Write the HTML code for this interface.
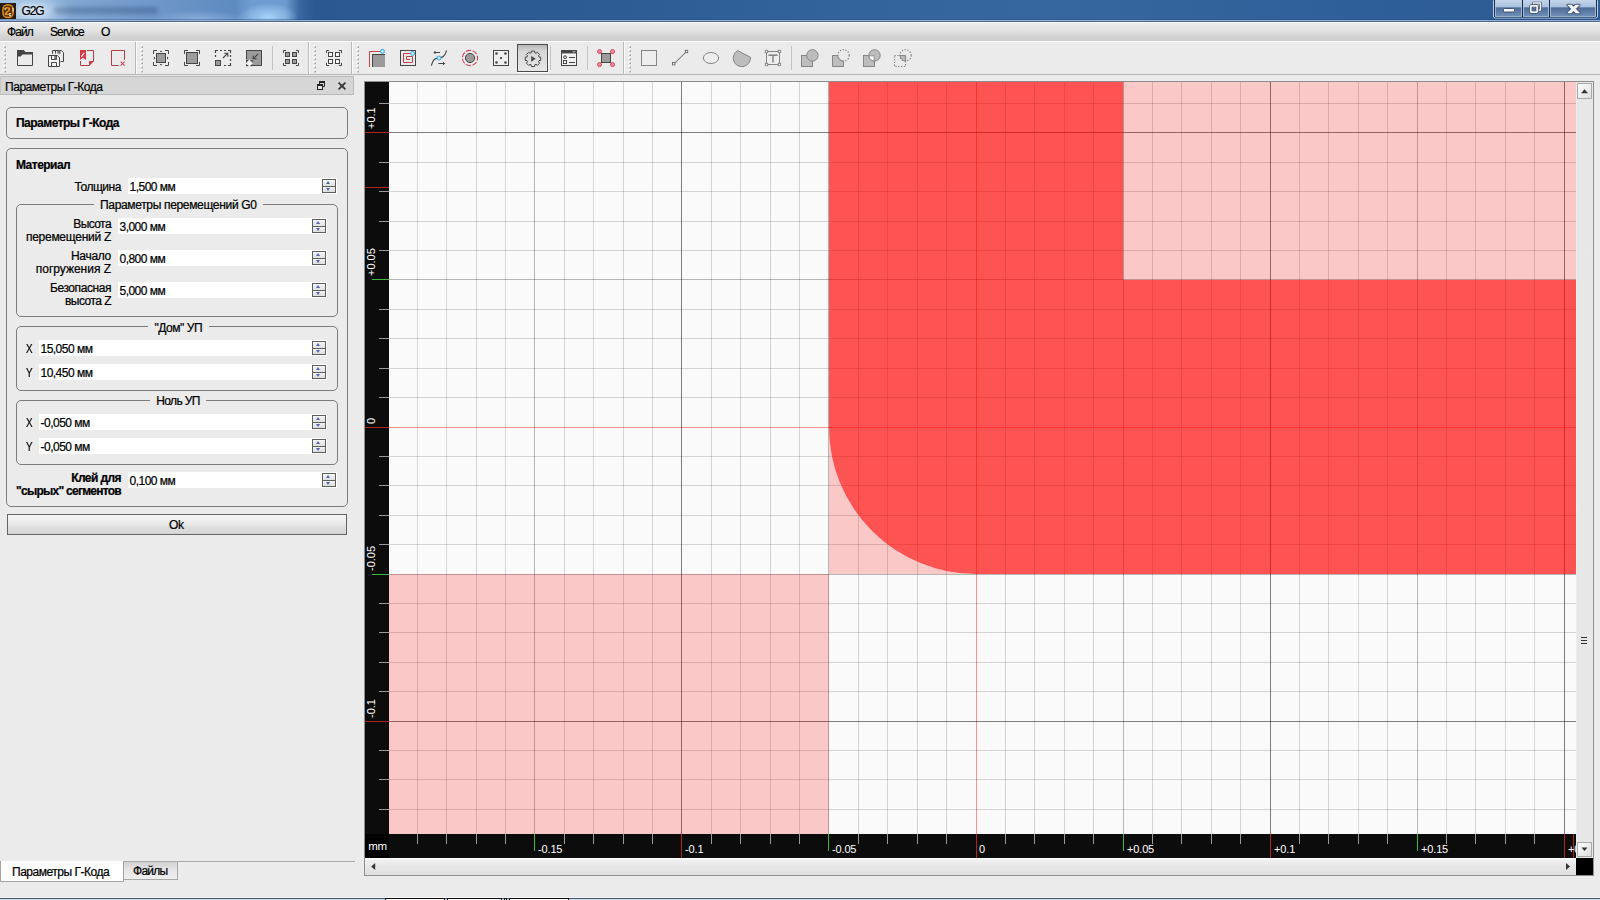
<!DOCTYPE html>
<html lang="ru">
<head>
<meta charset="utf-8">
<title>G2G</title>
<style>
*{box-sizing:border-box;margin:0;padding:0}
html,body{width:1600px;height:900px;overflow:hidden}
body{position:relative;background:#ebebeb;-webkit-text-stroke:.22px #000;font-family:"Liberation Sans","DejaVu Sans",sans-serif;font-size:12px;color:#000;line-height:14px}
.abs{position:absolute}
#title{position:absolute;left:0;top:0;width:1600px;height:22px;
 background:linear-gradient(90deg,#9fbfe1 0px,#98badf 45px,#82a8d3 70px,#7098c9 150px,#5d8ac0 235px,#6f9cd0 250px,#6f9cd0 285px,#3a669f 300px,#2b5891 315px,#2d5b94 600px,#33649b 850px,#36689f 1050px,#2f5f98 1350px,#2d5b94 1600px);}
#title .glow{position:absolute;left:0;top:0;width:700px;height:22px;background:radial-gradient(ellipse 30px 14px at 268px 17px,rgba(175,220,255,.85),rgba(175,220,255,0) 100%),radial-gradient(ellipse 50px 10px at 200px 20px,rgba(175,205,240,.5),rgba(175,205,240,0) 100%),radial-gradient(ellipse 40px 14px at 34px 11px,rgba(225,238,252,.6),rgba(215,232,250,0) 100%)}
#title .ghost{position:absolute;left:54px;top:7px;width:104px;height:7px;background:rgba(30,55,100,.30);filter:blur(2.2px);border-radius:4px}
#title .l1{position:absolute;left:0;top:19px;width:1600px;height:2px;background:linear-gradient(180deg,rgba(40,70,120,.35) 0,rgba(40,70,120,.35) 50%,#8fafd6 50%,#8fafd6 100%)}
#title .shade{display:none}
#title .line{position:absolute;left:0;top:21px;width:1600px;height:1px;background:#566a85}
#title .t{position:absolute;left:21.5px;top:3.5px;font-size:12px;line-height:14px;color:#000;letter-spacing:-1.1px;text-shadow:0 0 5px rgba(255,255,255,.9),0 0 8px rgba(255,255,255,.7)}
#menu{position:absolute;left:0;top:22px;width:1600px;height:19px;background:linear-gradient(180deg,#f5f8fd 0,#f5f8fd 1px,#ececec 1px,#e1e1e1 45%,#d2d2d2 80%,#cdcdcd 100%)}
#menu>span{position:absolute;top:3px;line-height:14px}
#tb{position:absolute;left:0;top:41px;width:1600px;height:34px;background:#ebebeb;border-bottom:1px solid #b4b4b4;border-top:1px solid #fdfdfd}
.lbl{position:absolute;white-space:nowrap;line-height:14px}
.r{text-align:right}
.l2{line-height:13px}
.b{font-weight:bold}
.inp{position:absolute;background:#fff;height:16px}
.inp>span{position:absolute;left:1.5px;top:2px;line-height:14px;white-space:nowrap}
.inp i{position:absolute;right:1px;top:1px;width:14px;height:14px;border:1px solid #5e5e5e;background:linear-gradient(180deg,#f6f6f6 0,#e2e2e2 45%,#f2f2f2 55%,#dedede 100%)}
.inp i:before{content:"";position:absolute;left:0;top:6px;width:12px;height:1px;background:#5e5e5e}
.inp i b{position:absolute;left:3px;width:0;height:0;border-left:2.5px solid transparent;border-right:2.5px solid transparent}
.inp i b.u{top:1px;border-bottom:3px solid #5560b4}
.inp i b.d{top:8px;border-top:3px solid #5560b4}
.gb{position:absolute;border:1px solid #7c7c7c;border-radius:5px}
.gbt{position:absolute;background:#ebebeb;padding:0 6px;white-space:nowrap;line-height:14px}
</style>
</head>
<body>
<!-- TITLE BAR -->
<div id="title"><div class="glow"></div><div class="ghost"></div><div class="shade"></div>
<div class="l1"></div><div class="line"></div>
<svg class="abs" style="left:0;top:3px" width="16" height="16" viewBox="0 0 16 16"><rect width="16" height="16" fill="#241b08"/><rect x="2.9" y="1.7" width="10.2" height="12.8" rx="4.6" ry="4.6" fill="#5a330a" stroke="#dd8d1f" stroke-width="1.5"/><text x="4.3" y="12.3" font-family="Liberation Sans, sans-serif" font-size="11px" font-weight="bold" fill="#e8961f">2</text><rect x="4.4" y="5.2" width="1.6" height="1.3" fill="#e9e3c8"/><rect x="12" y="5.3" width="2" height="1" fill="#efe6c4"/><rect x="12" y="7.3" width="2" height="1" fill="#efe6c4"/><rect x="9" y="10.2" width="2.2" height="1" fill="#efe6c4"/><rect x="9" y="12.2" width="2.2" height="1" fill="#efe6c4"/></svg>
<span class="t">G2G</span>
<svg class="abs" style="left:1490px;top:0" width="110" height="22" viewBox="1490 0 110 22">
<defs><linearGradient id="cb" x1="0" y1="0" x2="0" y2="1"><stop offset="0" stop-color="#c9d9ec"/><stop offset=".46" stop-color="#a9c0dd"/><stop offset=".5" stop-color="#4d6c97"/><stop offset="1" stop-color="#7291bb"/></linearGradient></defs>
<rect x="1493.5" y="-1.5" width="104" height="19.5" rx="2" fill="none" stroke="#b9d0ec"/>
<rect x="1494.5" y="-1.5" width="102" height="18.5" rx="1.5" fill="url(#cb)" stroke="#1c2c45"/>
<path d="M1522.5 0 V17 M1549.5 0 V17" stroke="#1c2c45"/>
<path d="M1495.5 0 V16.5 H1521.5 V0 M1523.5 0 V16.5 H1548.5 V0 M1550.5 0 V16.5 H1595.5 V0" fill="none" stroke="#b4cbe8" stroke-opacity=".75"/>
<rect x="1503.5" y="8.5" width="11" height="3.5" rx=".8" fill="#f4f7fb" stroke="#3a4c68" stroke-width=".9"/>
<path d="M1533.5 6.5 V3 H1540.5 V10 H1537" fill="#f4f7fb" fill-opacity="0" stroke="#3a4c68" stroke-width="2.6" stroke-linejoin="round"/>
<path d="M1533.5 6.5 V3 H1540.5 V10 H1537" fill="none" stroke="#f4f7fb" stroke-width="1.3" stroke-linejoin="round"/>
<rect x="1530.8" y="5.8" width="6.4" height="6.4" fill="none" stroke="#3a4c68" stroke-width="3" rx="1"/>
<rect x="1530.8" y="5.8" width="6.4" height="6.4" fill="none" stroke="#f4f7fb" stroke-width="1.7" rx=".6"/>
<text x="1567.8" y="12.8" font-family="Liberation Sans, sans-serif" font-size="15px" font-weight="bold" fill="#3a4c68" stroke="#3a4c68" stroke-width="2.4" stroke-linejoin="round" textLength="11.5" lengthAdjust="spacingAndGlyphs">x</text>
<text x="1567.8" y="12.8" font-family="Liberation Sans, sans-serif" font-size="15px" font-weight="bold" fill="#f6f8fb" stroke="#f6f8fb" stroke-width=".700" textLength="11.5" lengthAdjust="spacingAndGlyphs">x</text>
</svg>
</div>
<!-- MENU -->
<div id="menu"><span style="left:7px"><span style="letter-spacing:-0.9px">Файл</span></span><span style="left:50px"><span style="letter-spacing:-0.89px">Service</span></span><span style="left:101px"><span style="letter-spacing:-1.2px">О</span></span></div>
<!-- TOOLBAR -->
<div id="tb"></div>
<svg style="position:absolute;left:0;top:41px" width="1600" height="34" viewBox="0 41 1600 34">
<rect x="135" y="42" width="1" height="32" fill="#b9b9b9"/><rect x="136" y="42" width="1" height="32" fill="#fbfbfb"/>
<rect x="308" y="42" width="1" height="32" fill="#b9b9b9"/><rect x="309" y="42" width="1" height="32" fill="#fbfbfb"/>
<rect x="351" y="42" width="1" height="32" fill="#b9b9b9"/><rect x="352" y="42" width="1" height="32" fill="#fbfbfb"/>
<rect x="623" y="42" width="1" height="32" fill="#b9b9b9"/><rect x="624" y="42" width="1" height="32" fill="#fbfbfb"/>
<rect x="272" y="46" width="1" height="24" fill="#c4c4c4"/>
<rect x="550" y="46" width="1" height="24" fill="#c4c4c4"/>
<rect x="587" y="46" width="1" height="24" fill="#c4c4c4"/>
<rect x="791" y="46" width="1" height="24" fill="#c4c4c4"/>
<rect x="4.3" y="46.1" width="1.7" height="1.7" fill="#a6a6a6"/><rect x="3.3" y="45" width="1.6" height="1.6" fill="#ffffff"/><rect x="4.3" y="50.2" width="1.7" height="1.7" fill="#a6a6a6"/><rect x="3.3" y="49.1" width="1.6" height="1.6" fill="#ffffff"/><rect x="4.3" y="54.3" width="1.7" height="1.7" fill="#a6a6a6"/><rect x="3.3" y="53.2" width="1.6" height="1.6" fill="#ffffff"/><rect x="4.3" y="58.4" width="1.7" height="1.7" fill="#a6a6a6"/><rect x="3.3" y="57.3" width="1.6" height="1.6" fill="#ffffff"/><rect x="4.3" y="62.5" width="1.7" height="1.7" fill="#a6a6a6"/><rect x="3.3" y="61.4" width="1.6" height="1.6" fill="#ffffff"/><rect x="4.3" y="66.6" width="1.7" height="1.7" fill="#a6a6a6"/><rect x="3.3" y="65.5" width="1.6" height="1.6" fill="#ffffff"/><rect x="4.3" y="70.7" width="1.7" height="1.7" fill="#a6a6a6"/><rect x="3.3" y="69.6" width="1.6" height="1.6" fill="#ffffff"/>
<rect x="141.3" y="46.1" width="1.7" height="1.7" fill="#a6a6a6"/><rect x="140.3" y="45" width="1.6" height="1.6" fill="#ffffff"/><rect x="141.3" y="50.2" width="1.7" height="1.7" fill="#a6a6a6"/><rect x="140.3" y="49.1" width="1.6" height="1.6" fill="#ffffff"/><rect x="141.3" y="54.3" width="1.7" height="1.7" fill="#a6a6a6"/><rect x="140.3" y="53.2" width="1.6" height="1.6" fill="#ffffff"/><rect x="141.3" y="58.4" width="1.7" height="1.7" fill="#a6a6a6"/><rect x="140.3" y="57.3" width="1.6" height="1.6" fill="#ffffff"/><rect x="141.3" y="62.5" width="1.7" height="1.7" fill="#a6a6a6"/><rect x="140.3" y="61.4" width="1.6" height="1.6" fill="#ffffff"/><rect x="141.3" y="66.6" width="1.7" height="1.7" fill="#a6a6a6"/><rect x="140.3" y="65.5" width="1.6" height="1.6" fill="#ffffff"/><rect x="141.3" y="70.7" width="1.7" height="1.7" fill="#a6a6a6"/><rect x="140.3" y="69.6" width="1.6" height="1.6" fill="#ffffff"/>
<rect x="314.3" y="46.1" width="1.7" height="1.7" fill="#a6a6a6"/><rect x="313.3" y="45" width="1.6" height="1.6" fill="#ffffff"/><rect x="314.3" y="50.2" width="1.7" height="1.7" fill="#a6a6a6"/><rect x="313.3" y="49.1" width="1.6" height="1.6" fill="#ffffff"/><rect x="314.3" y="54.3" width="1.7" height="1.7" fill="#a6a6a6"/><rect x="313.3" y="53.2" width="1.6" height="1.6" fill="#ffffff"/><rect x="314.3" y="58.4" width="1.7" height="1.7" fill="#a6a6a6"/><rect x="313.3" y="57.3" width="1.6" height="1.6" fill="#ffffff"/><rect x="314.3" y="62.5" width="1.7" height="1.7" fill="#a6a6a6"/><rect x="313.3" y="61.4" width="1.6" height="1.6" fill="#ffffff"/><rect x="314.3" y="66.6" width="1.7" height="1.7" fill="#a6a6a6"/><rect x="313.3" y="65.5" width="1.6" height="1.6" fill="#ffffff"/><rect x="314.3" y="70.7" width="1.7" height="1.7" fill="#a6a6a6"/><rect x="313.3" y="69.6" width="1.6" height="1.6" fill="#ffffff"/>
<rect x="357.3" y="46.1" width="1.7" height="1.7" fill="#a6a6a6"/><rect x="356.3" y="45" width="1.6" height="1.6" fill="#ffffff"/><rect x="357.3" y="50.2" width="1.7" height="1.7" fill="#a6a6a6"/><rect x="356.3" y="49.1" width="1.6" height="1.6" fill="#ffffff"/><rect x="357.3" y="54.3" width="1.7" height="1.7" fill="#a6a6a6"/><rect x="356.3" y="53.2" width="1.6" height="1.6" fill="#ffffff"/><rect x="357.3" y="58.4" width="1.7" height="1.7" fill="#a6a6a6"/><rect x="356.3" y="57.3" width="1.6" height="1.6" fill="#ffffff"/><rect x="357.3" y="62.5" width="1.7" height="1.7" fill="#a6a6a6"/><rect x="356.3" y="61.4" width="1.6" height="1.6" fill="#ffffff"/><rect x="357.3" y="66.6" width="1.7" height="1.7" fill="#a6a6a6"/><rect x="356.3" y="65.5" width="1.6" height="1.6" fill="#ffffff"/><rect x="357.3" y="70.7" width="1.7" height="1.7" fill="#a6a6a6"/><rect x="356.3" y="69.6" width="1.6" height="1.6" fill="#ffffff"/>
<rect x="629.3" y="46.1" width="1.7" height="1.7" fill="#a6a6a6"/><rect x="628.3" y="45" width="1.6" height="1.6" fill="#ffffff"/><rect x="629.3" y="50.2" width="1.7" height="1.7" fill="#a6a6a6"/><rect x="628.3" y="49.1" width="1.6" height="1.6" fill="#ffffff"/><rect x="629.3" y="54.3" width="1.7" height="1.7" fill="#a6a6a6"/><rect x="628.3" y="53.2" width="1.6" height="1.6" fill="#ffffff"/><rect x="629.3" y="58.4" width="1.7" height="1.7" fill="#a6a6a6"/><rect x="628.3" y="57.3" width="1.6" height="1.6" fill="#ffffff"/><rect x="629.3" y="62.5" width="1.7" height="1.7" fill="#a6a6a6"/><rect x="628.3" y="61.4" width="1.6" height="1.6" fill="#ffffff"/><rect x="629.3" y="66.6" width="1.7" height="1.7" fill="#a6a6a6"/><rect x="628.3" y="65.5" width="1.6" height="1.6" fill="#ffffff"/><rect x="629.3" y="70.7" width="1.7" height="1.7" fill="#a6a6a6"/><rect x="628.3" y="69.6" width="1.6" height="1.6" fill="#ffffff"/>
<defs><linearGradient id="pb" x1="0" y1="0" x2="0" y2="1"><stop offset="0" stop-color="#b4b4b4"/><stop offset=".25" stop-color="#d6d6d6"/><stop offset="1" stop-color="#e8e8e8"/></linearGradient></defs>
<rect x="517.5" y="44.5" width="30" height="27" fill="url(#pb)" stroke="#4a4a4a"/>
<path d="M517 72.5 H548.5 V44" stroke="#fbfbfb" fill="none"/>
<path d="M17.5 50.5 V65.5 H32.5 V52.5" fill="none" stroke="#454545"/>
<path d="M17 50 H23.6 L25.6 52 H33 V54.6 H22.6 L20.6 56.6 H17 Z" fill="#454545"/>
<path d="M52.5 53.8 V50.5 H61.3 L63.5 52.7 V61.5 H60.6" fill="none" stroke="#454545"/>
<path d="M55.5 50.5 V53.6 M58 50.5 V53.6" stroke="#454545" fill="none"/><rect x="58.2" y="50.5" width="2.4" height="3.2" fill="#777"/>
<path d="M48.5 55.5 H57.3 L59.5 57.7 V66.5 H48.5 Z" fill="#f2f2f2" stroke="#454545"/>
<path d="M51.5 55.5 V59.5 H56.5 V55.5" fill="none" stroke="#454545"/><rect x="54.2" y="56" width="2.2" height="3.2" fill="#777"/>
<path d="M51.5 66.5 V62.5 H56.5 V66.5" fill="none" stroke="#454545"/>
<path d="M80 50 H86 V60 L83 57.8 L80 60 Z" fill="#d8394a"/>
<path d="M81.6 56.4 L83.9 53.2" stroke="#fbe0e3" stroke-width="1.3" stroke-linecap="round"/>
<path d="M87 50.5 H93.5 V61.5 H89.5 V65.5 H80.5 V61" fill="none" stroke="#b33c4a"/>
<path d="M89.5 61.5 H93.7 L89.5 65.7 Z" fill="#d8394a"/>
<path d="M118.5 65.5 H111.5 V50.5 H124.5 V59.8" fill="none" stroke="#b33c4a"/>
<path d="M120.6 61.6 L124.6 65.6 M124.6 61.6 L120.6 65.6" stroke="#cf4563" stroke-width="1.1" fill="none"/>
<path fill="none" stroke="#454545" d="M153.5 54 V50.5 H157 M165 50.5 H168.5 V54 M168.5 62 V65.5 H165 M157 65.5 H153.5 V62"/>
<rect x="156.5" y="53.5" width="9" height="9" fill="#9b9b9b" stroke="#454545"/>
<path d="M159.6 52 L161 50.4 L162.4 52 Z M159.6 64 L161 65.6 L162.4 64 Z M155 56.6 L153.4 58 L155 59.4 Z M167 56.6 L168.6 58 L167 59.4 Z" fill="#454545"/>
<path fill="none" stroke="#454545" d="M184.5 54 V50.5 H188 M196 50.5 H199.5 V54 M199.5 62 V65.5 H196 M188 65.5 H184.5 V62"/>
<rect x="186.5" y="52.5" width="11" height="11" fill="#9b9b9b" stroke="#454545"/>
<path d="M215.5 57 V55 M215.5 53 V50.5 H218 M220 50.5 H222 M224 50.5 H226 M228 50.5 H230.5 V53 M230.5 55 V57 M230.5 59 V61 M230.5 63 V65.5 H228 M226 65.5 H224" fill="none" stroke="#454545" stroke-width="1.2"/>
<rect x="215.5" y="60.5" width="5" height="5" fill="#9b9b9b" stroke="#454545"/>
<path d="M223 58 L227.6 53.4 M224.2 53.2 H227.8 V56.8" fill="none" stroke="#454545" stroke-width="1.1"/>
<path d="M246.5 59 V50.5 H261.5 V65.5 H253" fill="#9b9b9b" stroke="none"/>
<rect x="246" y="50" width="16" height="16" fill="#9b9b9b"/>
<path d="M246.5 59.5 V50.5 H261.5 V65.5 H252.5" fill="none" stroke="#454545"/>
<rect x="245.6" y="59.9" width="7" height="6.8" fill="#f6f6f6"/>
<path d="M246.6 62.4 V60.6 H248.4 M250.4 60.6 H252.2 V62.4 M252.2 64.2 V65.6 H250.4 M248.4 65.6 H246.6 V64.2" fill="none" stroke="#454545" stroke-width="1.2"/>
<path d="M258 54 L253.4 58.6 M253.2 55.4 V58.8 H256.6" fill="none" stroke="#454545" stroke-width="1.1"/>
<path fill="none" stroke="#454545" d="M283.5 53.1 V50.5 H286.1 M295.9 50.5 H298.5 V53.1 M298.5 62.9 V65.5 H295.9 M286.1 65.5 H283.5 V62.9"/>
<rect x="285.5" y="52.5" width="4" height="4" fill="#9b9b9b" stroke="#454545"/>
<rect x="292.5" y="52.5" width="4" height="4" fill="#9b9b9b" stroke="#454545"/>
<rect x="285.5" y="59.5" width="4" height="4" fill="#9b9b9b" stroke="#454545"/>
<rect x="292.5" y="59.5" width="4" height="4" fill="#9b9b9b" stroke="#454545"/>
<path fill="none" stroke="#454545" d="M326.5 53.1 V50.5 H329.1 M338.9 50.5 H341.5 V53.1 M341.5 62.9 V65.5 H338.9 M329.1 65.5 H326.5 V62.9"/>
<rect x="328.5" y="52.5" width="4" height="4" fill="#fafafa" stroke="#454545"/>
<rect x="335.5" y="52.5" width="4" height="4" fill="#fafafa" stroke="#454545"/>
<rect x="328.5" y="59.5" width="4" height="4" fill="#fafafa" stroke="#454545"/>
<rect x="335.5" y="59.5" width="4" height="4" fill="#fafafa" stroke="#454545"/>
<rect x="372" y="54" width="13" height="13" fill="#9b9b9b"/>
<path d="M372.5 67 V54.5 H385" fill="none" stroke="#454545"/>
<path d="M369.5 67 V51.5 H381" fill="none" stroke="#cc4444"/>
<circle cx="382.5" cy="51.3" r="2" fill="#b5e7ff" stroke="#3fa6e6" stroke-width="1"/>
<rect x="400.5" y="50.5" width="15" height="15" fill="none" stroke="#454545"/>
<path d="M412 53.5 H403.5 V62.5 H412.5 V56.5 H406.5 V59.5 H410" fill="none" stroke="#c8404c"/>
<circle cx="412.6" cy="53.4" r="2" fill="#b5e7ff" stroke="#3fa6e6" stroke-width="1"/>
<path d="M431.3 65.6 C433 58 436 58.5 439 58 C442 57.5 445 57 446.6 50.4" fill="none" stroke="#454545" stroke-width="1.1"/>
<path d="M440 52.5 H434 M435.6 50.9 L434 52.5 L435.6 54.1" fill="none" stroke="#454545"/>
<path d="M438.4 63.5 H444.6 M443 61.9 L444.6 63.5 L443 65.1" fill="none" stroke="#454545"/>
<circle cx="439" cy="58" r="2" fill="#b5e7ff" stroke="#3fa6e6" stroke-width="1"/>
<circle cx="470" cy="58" r="7.6" fill="none" stroke="#d2405e" stroke-width="1.1" stroke-dasharray="5.2 1.6" stroke-dashoffset="2.6"/>
<circle cx="470" cy="58" r="4.6" fill="#9b9b9b" stroke="#454545" stroke-width="1"/>
<rect x="493.5" y="50.5" width="15" height="15" fill="#f0f0f0" stroke="#454545"/>
<circle cx="496.5" cy="53.5" r="1.3" fill="#454545"/>
<circle cx="505.5" cy="53.5" r="1.3" fill="#454545"/>
<circle cx="496.5" cy="62.5" r="1.3" fill="#454545"/>
<circle cx="505.5" cy="62.5" r="1.3" fill="#454545"/>
<circle cx="501" cy="58" r="1" fill="#222"/>
<path d="M531.24 52.75 L531.4 51.06 L534.6 51.06 L534.76 52.75 L536.04 53.28 L537.34 52.2 L539.6 54.46 L538.52 55.76 L539.05 57.04 L540.74 57.2 L540.74 60.4 L539.05 60.56 L538.52 61.84 L539.6 63.14 L537.34 65.4 L536.04 64.32 L534.76 64.85 L534.6 66.54 L531.4 66.54 L531.24 64.85 L529.96 64.32 L528.66 65.4 L526.4 63.14 L527.48 61.84 L526.95 60.56 L525.26 60.4 L525.26 57.2 L526.95 57.04 L527.48 55.76 L526.4 54.46 L528.66 52.2 L529.96 53.28 Z" fill="none" stroke="#454545" stroke-width="1" stroke-linejoin="round"/>
<path d="M531.2 55.9 L535.7 58.8 L531.2 61.7 Z" fill="#454545"/>
<rect x="561.5" y="50.5" width="15" height="15" fill="#f0f0f0" stroke="#454545"/>
<rect x="561" y="50" width="16" height="3.4" fill="#454545"/>
<path d="M572.6 51 L574 52.4 L575.4 51" stroke="#ddd" fill="none" stroke-width=".9"/>
<circle cx="565" cy="57.2" r="1.4" fill="none" stroke="#454545"/>
<rect x="563.5" y="60.5" width="3" height="3" fill="#fff" stroke="#454545"/>
<path d="M569 57.5 H575 M569 62.5 H575" stroke="#454545"/>
<rect x="601.5" y="53.5" width="9" height="9" fill="#9b9b9b" stroke="#454545"/>
<circle cx="599.5" cy="51.6" r="2" fill="#f28a9a" stroke="#e0435e" stroke-width="1"/>
<circle cx="612.5" cy="51.6" r="2" fill="#f28a9a" stroke="#e0435e" stroke-width="1"/>
<circle cx="599.5" cy="64.6" r="2" fill="#f28a9a" stroke="#e0435e" stroke-width="1"/>
<circle cx="612.5" cy="64.6" r="2" fill="#f28a9a" stroke="#e0435e" stroke-width="1"/>
<rect x="641.5" y="50.5" width="15" height="15" fill="#eeeeee" stroke="#858585"/>
<path d="M674.8 63.2 L685.2 52.8" stroke="#858585" stroke-width="1.1"/>
<rect x="672.5" y="62.5" width="2.4" height="2.4" fill="#f4f4f4" stroke="#6a6a6a" stroke-width=".9"/><rect x="685.3" y="50.3" width="2.4" height="2.4" fill="#f4f4f4" stroke="#6a6a6a" stroke-width=".9"/>
<ellipse cx="711" cy="58" rx="7.6" ry="5.5" fill="#eeeeee" stroke="#858585"/>
<path d="M737.6 50.6 A8.6 8.6 0 1 0 750.4 57.2 Z" fill="#bdbdbd" stroke="#858585"/>
<rect x="766.5" y="51.5" width="13" height="13" fill="#eeeeee" stroke="#858585"/>
<rect x="765.3" y="50.3" width="2.4" height="2.4" fill="#f6f6f6" stroke="#858585" stroke-width=".9"/>
<rect x="778.3" y="50.3" width="2.4" height="2.4" fill="#f6f6f6" stroke="#858585" stroke-width=".9"/>
<rect x="765.3" y="63.3" width="2.4" height="2.4" fill="#f6f6f6" stroke="#858585" stroke-width=".9"/>
<rect x="778.3" y="63.3" width="2.4" height="2.4" fill="#f6f6f6" stroke="#858585" stroke-width=".9"/>
<path d="M768.4 55.2 H777.6" stroke="#858585" stroke-width="1.6"/><path d="M773 55 V62.6" stroke="#858585" stroke-width="1.5"/>
<rect x="801.5" y="55.5" width="11" height="11" fill="#bdbdbd" stroke="#858585"/>
<circle cx="812.4" cy="55.4" r="5.7" fill="#bdbdbd" stroke="#858585"/>
<path d="M832.5 55.5 H837.8 A5.7 5.7 0 0 0 843.5 61.1 V66.5 H832.5 Z" fill="#bdbdbd" stroke="#858585"/>
<circle cx="843.5" cy="55.4" r="5.7" fill="none" stroke="#858585" stroke-width="1.2" stroke-dasharray="1.3 1.5"/>
<rect x="863.5" y="55.5" width="11" height="11" fill="#bdbdbd" stroke="#858585"/>
<circle cx="874.5" cy="55.4" r="5.7" fill="#bdbdbd" stroke="#858585"/>
<path d="M869 55.8 H874.2 V60.9 A5.7 5.7 0 0 1 869 55.8 Z" fill="#fafafa" stroke="#858585" stroke-width=".8"/>
<rect x="894.5" y="55.5" width="11" height="11" fill="none" stroke="#858585" stroke-width="1.2" stroke-dasharray="1.3 1.5"/>
<circle cx="905.5" cy="55.4" r="5.7" fill="none" stroke="#858585" stroke-width="1.2" stroke-dasharray="1.3 1.5"/>
<path d="M900 55.6 H905.6 V61 A5.7 5.7 0 0 1 900 55.6 Z" fill="#bdbdbd" stroke="#858585"/>
</svg>

<!-- LEFT DOCK -->
<div id="dock">
<div class="abs" style="left:0;top:76px;width:354px;height:19px;background:#d6d6d6;border:1px solid #b9b9b9;border-left-color:#c8c8c8"></div>
<svg class="abs" style="left:314px;top:78px" width="36" height="15" viewBox="314 78 36 15"><path d="M319.5 84 V82 H324.5 V86.5 H323" fill="none" stroke="#222"/><rect x="319" y="81" width="6" height="2" fill="#222"/><rect x="317.5" y="85.5" width="5" height="4" fill="#e4e4e4" stroke="#222"/><rect x="317" y="84" width="6" height="2" fill="#222"/><path d="M338.6 82.6 L345.4 89.4 M345.4 82.6 L338.6 89.4" stroke="#333" stroke-width="1.7"/></svg>
<div class="lbl" style="left:5px;top:80px"><span style="letter-spacing:-0.46px">Параметры Г-Кода</span></div>

<div class="gb" style="left:6px;top:107px;width:342px;height:32px"></div>
<div class="lbl b" style="left:16px;top:116px"><span style="letter-spacing:-0.51px">Параметры Г-Кода</span></div>

<div class="gb" style="left:6px;top:148px;width:342px;height:359px"></div>
<div class="lbl b" style="left:16px;top:158px"><span style="letter-spacing:-0.52px">Материал</span></div>

<div class="lbl r" style="right:1479px;top:180px"><span style="letter-spacing:-0.46px">Толщина</span></div>
<div class="inp" style="left:128px;top:178px;width:209px"><span><span style="letter-spacing:-0.5px">1,500 мм</span></span><i><b class="u"></b><b class="d"></b></i></div>

<div class="gb" style="left:16px;top:204px;width:322px;height:113px"></div>
<div class="gbt" style="left:94px;top:198px"><span style="letter-spacing:-0.33px">Параметры перемещений G0</span></div>
<div class="lbl r l2" style="right:1489px;top:218px"><span style="letter-spacing:-0.57px">Высота</span><br><span style="letter-spacing:-0.27px">перемещений Z</span></div>
<div class="inp" style="left:118px;top:218px;width:209px"><span><span style="letter-spacing:-0.52px">3,000 мм</span></span><i><b class="u"></b><b class="d"></b></i></div>
<div class="lbl r l2" style="right:1489px;top:250px"><span style="letter-spacing:-0.3px">Начало</span><br><span style="letter-spacing:-0.02px">погружения Z</span></div>
<div class="inp" style="left:118px;top:250px;width:209px"><span><span style="letter-spacing:-0.52px">0,800 мм</span></span><i><b class="u"></b><b class="d"></b></i></div>
<div class="lbl r l2" style="right:1489px;top:282px"><span style="letter-spacing:-0.43px">Безопасная</span><br><span style="letter-spacing:-0.53px">высота Z</span></div>
<div class="inp" style="left:118px;top:282px;width:209px"><span><span style="letter-spacing:-0.52px">5,000 мм</span></span><i><b class="u"></b><b class="d"></b></i></div>

<div class="gb" style="left:16px;top:326px;width:322px;height:65px"></div>
<div class="gbt" style="left:147.5px;top:321px;padding:0 7px"><span style="letter-spacing:-0.46px">"Дом" УП</span></div>
<div class="lbl" style="left:26px;top:342px;transform:scaleX(.82);transform-origin:0 0">X</div>
<div class="inp" style="left:39px;top:340px;width:288px"><span><span style="letter-spacing:-0.52px">15,050 мм</span></span><i><b class="u"></b><b class="d"></b></i></div>
<div class="lbl" style="left:26px;top:366px;transform:scaleX(.82);transform-origin:0 0">Y</div>
<div class="inp" style="left:39px;top:364px;width:288px"><span><span style="letter-spacing:-0.52px">10,450 мм</span></span><i><b class="u"></b><b class="d"></b></i></div>

<div class="gb" style="left:16px;top:400px;width:322px;height:65px"></div>
<div class="gbt" style="left:150.3px;top:394px"><span style="letter-spacing:-0.63px">Ноль УП</span></div>
<div class="lbl" style="left:26px;top:416px;transform:scaleX(.82);transform-origin:0 0">X</div>
<div class="inp" style="left:39px;top:414px;width:288px"><span><span style="letter-spacing:-0.51px">-0,050 мм</span></span><i><b class="u"></b><b class="d"></b></i></div>
<div class="lbl" style="left:26px;top:440px;transform:scaleX(.82);transform-origin:0 0">Y</div>
<div class="inp" style="left:39px;top:438px;width:288px"><span><span style="letter-spacing:-0.51px">-0,050 мм</span></span><i><b class="u"></b><b class="d"></b></i></div>

<div class="lbl r b l2" style="right:1479px;top:472px"><span style="letter-spacing:-0.58px">Клей для</span><br><span style="letter-spacing:-0.74px">"сырых" сегментов</span></div>
<div class="inp" style="left:128px;top:472px;width:209px"><span><span style="letter-spacing:-0.5px">0,100 мм</span></span><i><b class="u"></b><b class="d"></b></i></div>

<div class="abs" style="left:7px;top:514px;width:340px;height:21px;border:1px solid #636363;background:linear-gradient(180deg,#f6f6f6 0,#e9e9e9 45%,#dcdcdc 70%,#d5d5d5 100%)"></div>
<div class="lbl" style="left:169px;top:518px"><span style="letter-spacing:-0.37px">Ok</span></div>

<!-- bottom tabs -->
<div class="abs" style="left:0;top:861px;width:355px;height:1px;background:#a9a9a9"></div>
<div class="abs" style="left:0;top:861px;width:124px;height:21px;background:#fff;border:1px solid #a3a3a3;border-top:none"></div>
<div class="lbl" style="left:12px;top:865px"><span style="letter-spacing:-0.48px">Параметры Г-Кода</span></div>
<div class="abs" style="left:124px;top:862px;width:54px;height:18px;background:linear-gradient(180deg,#d2d2d2,#e6e6e6 50%,#efefef);border:1px solid #a9a9a9;border-top:none;border-left:none"></div>
<div class="lbl" style="left:133px;top:864px"><span style="letter-spacing:-0.73px">Файлы</span></div>
</div>

<!-- bottom window border -->
<div class="abs" style="left:0;top:897px;width:1600px;height:1px;background:#f3f3f3"></div>
<div class="abs" style="left:0;top:898px;width:1600px;height:1px;background:#4b5b70"></div>
<div class="abs" style="left:0;top:899px;width:1600px;height:1px;background:#c4dbf4"></div>
<div class="abs" style="left:385px;top:898px;width:60px;height:2px;background:#fff;border:1px solid #111;border-bottom:none"></div>
<div class="abs" style="left:447px;top:898px;width:55px;height:2px;background:#fff;border:1px solid #111;border-bottom:none"></div>
<div class="abs" style="left:504px;top:898px;width:3px;height:2px;background:#fff;border:1px solid #111;border-bottom:none"></div>
<div class="abs" style="left:509px;top:898px;width:60px;height:2px;background:#fff;border:1px solid #111;border-bottom:none"></div>
<!-- CANVAS -->
<svg style="position:absolute;left:364px;top:81px" width="1230" height="795" viewBox="364 81 1230 795" font-family="Liberation Sans, DejaVu Sans, sans-serif">
<rect x="364" y="81" width="1230" height="795" fill="#8e8e8e"/>
<rect x="365" y="82" width="1228" height="793" fill="#ebebeb"/>
<rect x="389" y="82" width="1187" height="752" fill="#fafafa"/>
<svg x="389" y="82" width="1187" height="752" viewBox="389 82 1187 752">
<rect x="417" y="82" width="1" height="752" fill="rgba(0,0,0,.15)"/><rect x="446" y="82" width="1" height="752" fill="rgba(0,0,0,.15)"/><rect x="476" y="82" width="1" height="752" fill="rgba(0,0,0,.15)"/><rect x="505" y="82" width="1" height="752" fill="rgba(0,0,0,.15)"/><rect x="534" y="82" width="1" height="752" fill="rgba(0,0,0,.27)"/><rect x="564" y="82" width="1" height="752" fill="rgba(0,0,0,.15)"/><rect x="593" y="82" width="1" height="752" fill="rgba(0,0,0,.15)"/><rect x="623" y="82" width="1" height="752" fill="rgba(0,0,0,.15)"/><rect x="652" y="82" width="1" height="752" fill="rgba(0,0,0,.15)"/><rect x="681" y="82" width="1" height="752" fill="rgba(0,0,0,.50)"/><rect x="711" y="82" width="1" height="752" fill="rgba(0,0,0,.15)"/><rect x="740" y="82" width="1" height="752" fill="rgba(0,0,0,.15)"/><rect x="770" y="82" width="1" height="752" fill="rgba(0,0,0,.15)"/><rect x="799" y="82" width="1" height="752" fill="rgba(0,0,0,.15)"/><rect x="828" y="82" width="1" height="752" fill="rgba(0,0,0,.27)"/><rect x="858" y="82" width="1" height="752" fill="rgba(0,0,0,.15)"/><rect x="887" y="82" width="1" height="752" fill="rgba(0,0,0,.15)"/><rect x="917" y="82" width="1" height="752" fill="rgba(0,0,0,.15)"/><rect x="946" y="82" width="1" height="752" fill="rgba(0,0,0,.15)"/><rect x="976" y="82" width="1" height="752" fill="rgba(255,0,0,.42)"/><rect x="1005" y="82" width="1" height="752" fill="rgba(0,0,0,.15)"/><rect x="1034" y="82" width="1" height="752" fill="rgba(0,0,0,.15)"/><rect x="1064" y="82" width="1" height="752" fill="rgba(0,0,0,.15)"/><rect x="1093" y="82" width="1" height="752" fill="rgba(0,0,0,.15)"/><rect x="1123" y="82" width="1" height="752" fill="rgba(0,0,0,.27)"/><rect x="1152" y="82" width="1" height="752" fill="rgba(0,0,0,.15)"/><rect x="1181" y="82" width="1" height="752" fill="rgba(0,0,0,.15)"/><rect x="1211" y="82" width="1" height="752" fill="rgba(0,0,0,.15)"/><rect x="1240" y="82" width="1" height="752" fill="rgba(0,0,0,.15)"/><rect x="1270" y="82" width="1" height="752" fill="rgba(0,0,0,.50)"/><rect x="1299" y="82" width="1" height="752" fill="rgba(0,0,0,.15)"/><rect x="1328" y="82" width="1" height="752" fill="rgba(0,0,0,.15)"/><rect x="1358" y="82" width="1" height="752" fill="rgba(0,0,0,.15)"/><rect x="1387" y="82" width="1" height="752" fill="rgba(0,0,0,.15)"/><rect x="1417" y="82" width="1" height="752" fill="rgba(0,0,0,.27)"/><rect x="1446" y="82" width="1" height="752" fill="rgba(0,0,0,.15)"/><rect x="1475" y="82" width="1" height="752" fill="rgba(0,0,0,.15)"/><rect x="1505" y="82" width="1" height="752" fill="rgba(0,0,0,.15)"/><rect x="1534" y="82" width="1" height="752" fill="rgba(0,0,0,.15)"/><rect x="1564" y="82" width="1" height="752" fill="rgba(0,0,0,.50)"/><rect x="389" y="103" width="1187" height="1" fill="rgba(0,0,0,.15)"/><rect x="389" y="132" width="1187" height="1" fill="rgba(0,0,0,.50)"/><rect x="389" y="162" width="1187" height="1" fill="rgba(0,0,0,.15)"/><rect x="389" y="191" width="1187" height="1" fill="rgba(0,0,0,.15)"/><rect x="389" y="221" width="1187" height="1" fill="rgba(0,0,0,.15)"/><rect x="389" y="250" width="1187" height="1" fill="rgba(0,0,0,.15)"/><rect x="389" y="279" width="1187" height="1" fill="rgba(0,0,0,.27)"/><rect x="389" y="309" width="1187" height="1" fill="rgba(0,0,0,.15)"/><rect x="389" y="338" width="1187" height="1" fill="rgba(0,0,0,.15)"/><rect x="389" y="368" width="1187" height="1" fill="rgba(0,0,0,.15)"/><rect x="389" y="397" width="1187" height="1" fill="rgba(0,0,0,.15)"/><rect x="389" y="427" width="1187" height="1" fill="rgba(255,0,0,.42)"/><rect x="389" y="456" width="1187" height="1" fill="rgba(0,0,0,.15)"/><rect x="389" y="485" width="1187" height="1" fill="rgba(0,0,0,.15)"/><rect x="389" y="515" width="1187" height="1" fill="rgba(0,0,0,.15)"/><rect x="389" y="544" width="1187" height="1" fill="rgba(0,0,0,.15)"/><rect x="389" y="574" width="1187" height="1" fill="rgba(0,0,0,.27)"/><rect x="389" y="603" width="1187" height="1" fill="rgba(0,0,0,.15)"/><rect x="389" y="632" width="1187" height="1" fill="rgba(0,0,0,.15)"/><rect x="389" y="662" width="1187" height="1" fill="rgba(0,0,0,.15)"/><rect x="389" y="691" width="1187" height="1" fill="rgba(0,0,0,.15)"/><rect x="389" y="721" width="1187" height="1" fill="rgba(0,0,0,.50)"/><rect x="389" y="750" width="1187" height="1" fill="rgba(0,0,0,.15)"/><rect x="389" y="779" width="1187" height="1" fill="rgba(0,0,0,.15)"/><rect x="389" y="809" width="1187" height="1" fill="rgba(0,0,0,.15)"/>
<rect x="389" y="574.05" width="439.95" height="400" fill="rgba(255,0,0,.2)"/>
<rect x="1123.05" y="0" width="600" height="279.95" fill="rgba(255,0,0,.2)"/>
<path d="M828.95 427 A147.05 147.05 0 0 0 976 574.05 H828.95 Z" fill="rgba(255,0,0,.2)"/>
<path d="M828.95 0 H1123.05 V279.95 H1700 V574.05 H976 A147.05 147.05 0 0 1 828.95 427 Z" fill="rgba(255,0,0,.672)"/>
</svg>
<rect x="365" y="82" width="24" height="752" fill="#0c0c0c"/>
<rect x="389" y="834" width="1187" height="24" fill="#0c0c0c"/>
<rect x="365" y="834" width="24" height="24" fill="#000"/>
<rect x="379" y="103" width="10" height="1" fill="#9a9a9a"/><rect x="365" y="132" width="24" height="1" fill="#b52222"/><rect x="379" y="162" width="10" height="1" fill="#9a9a9a"/><rect x="379" y="191" width="10" height="1" fill="#9a9a9a"/><rect x="379" y="221" width="10" height="1" fill="#9a9a9a"/><rect x="379" y="250" width="10" height="1" fill="#9a9a9a"/><rect x="372" y="279" width="17" height="1" fill="#3fb83f"/><rect x="379" y="309" width="10" height="1" fill="#9a9a9a"/><rect x="379" y="338" width="10" height="1" fill="#9a9a9a"/><rect x="379" y="368" width="10" height="1" fill="#9a9a9a"/><rect x="379" y="397" width="10" height="1" fill="#9a9a9a"/><rect x="365" y="427" width="24" height="1" fill="#b52222"/><rect x="379" y="456" width="10" height="1" fill="#9a9a9a"/><rect x="379" y="485" width="10" height="1" fill="#9a9a9a"/><rect x="379" y="515" width="10" height="1" fill="#9a9a9a"/><rect x="379" y="544" width="10" height="1" fill="#9a9a9a"/><rect x="372" y="574" width="17" height="1" fill="#3fb83f"/><rect x="379" y="603" width="10" height="1" fill="#9a9a9a"/><rect x="379" y="632" width="10" height="1" fill="#9a9a9a"/><rect x="379" y="662" width="10" height="1" fill="#9a9a9a"/><rect x="379" y="691" width="10" height="1" fill="#9a9a9a"/><rect x="365" y="721" width="24" height="1" fill="#b52222"/><rect x="379" y="750" width="10" height="1" fill="#9a9a9a"/><rect x="379" y="779" width="10" height="1" fill="#9a9a9a"/><rect x="379" y="809" width="10" height="1" fill="#9a9a9a"/><rect x="365" y="187" width="24" height="1" fill="#b52222"/><rect x="417" y="834" width="1" height="10" fill="#9a9a9a"/><rect x="446" y="834" width="1" height="10" fill="#9a9a9a"/><rect x="476" y="834" width="1" height="10" fill="#9a9a9a"/><rect x="505" y="834" width="1" height="10" fill="#9a9a9a"/><rect x="534" y="834" width="1" height="17" fill="#3fb83f"/><rect x="564" y="834" width="1" height="10" fill="#9a9a9a"/><rect x="593" y="834" width="1" height="10" fill="#9a9a9a"/><rect x="623" y="834" width="1" height="10" fill="#9a9a9a"/><rect x="652" y="834" width="1" height="10" fill="#9a9a9a"/><rect x="681" y="834" width="1" height="24" fill="#b52222"/><rect x="711" y="834" width="1" height="10" fill="#9a9a9a"/><rect x="740" y="834" width="1" height="10" fill="#9a9a9a"/><rect x="770" y="834" width="1" height="10" fill="#9a9a9a"/><rect x="799" y="834" width="1" height="10" fill="#9a9a9a"/><rect x="828" y="834" width="1" height="17" fill="#3fb83f"/><rect x="858" y="834" width="1" height="10" fill="#9a9a9a"/><rect x="887" y="834" width="1" height="10" fill="#9a9a9a"/><rect x="917" y="834" width="1" height="10" fill="#9a9a9a"/><rect x="946" y="834" width="1" height="10" fill="#9a9a9a"/><rect x="976" y="834" width="1" height="24" fill="#b52222"/><rect x="1005" y="834" width="1" height="10" fill="#9a9a9a"/><rect x="1034" y="834" width="1" height="10" fill="#9a9a9a"/><rect x="1064" y="834" width="1" height="10" fill="#9a9a9a"/><rect x="1093" y="834" width="1" height="10" fill="#9a9a9a"/><rect x="1123" y="834" width="1" height="17" fill="#3fb83f"/><rect x="1152" y="834" width="1" height="10" fill="#9a9a9a"/><rect x="1181" y="834" width="1" height="10" fill="#9a9a9a"/><rect x="1211" y="834" width="1" height="10" fill="#9a9a9a"/><rect x="1240" y="834" width="1" height="10" fill="#9a9a9a"/><rect x="1270" y="834" width="1" height="24" fill="#b52222"/><rect x="1299" y="834" width="1" height="10" fill="#9a9a9a"/><rect x="1328" y="834" width="1" height="10" fill="#9a9a9a"/><rect x="1358" y="834" width="1" height="10" fill="#9a9a9a"/><rect x="1387" y="834" width="1" height="10" fill="#9a9a9a"/><rect x="1417" y="834" width="1" height="17" fill="#3fb83f"/><rect x="1446" y="834" width="1" height="10" fill="#9a9a9a"/><rect x="1475" y="834" width="1" height="10" fill="#9a9a9a"/><rect x="1505" y="834" width="1" height="10" fill="#9a9a9a"/><rect x="1534" y="834" width="1" height="10" fill="#9a9a9a"/><rect x="1564" y="834" width="1" height="24" fill="#b52222"/><rect x="1573" y="834" width="1" height="24" fill="#b52222"/>
<g fill="#fff" font-size="11px">
<svg x="389" y="834" width="1187" height="24" viewBox="389 834 1187 24" overflow="hidden">
<text x="538" y="853" letter-spacing="-0.15">-0.15</text>
<text x="685" y="853" letter-spacing="-0.15">-0.1</text>
<text x="832" y="853" letter-spacing="-0.15">-0.05</text>
<text x="978.9" y="853" letter-spacing="-0.15">0</text>
<text x="1127" y="853" letter-spacing="-0.15">+0.05</text>
<text x="1274" y="853" letter-spacing="-0.15">+0.1</text>
<text x="1421" y="853" letter-spacing="-0.15">+0.15</text>
<text x="1568" y="853" letter-spacing="-0.15">+0.2</text>
</svg>
<text transform="translate(375,129) rotate(-90)" letter-spacing="0">+0.1</text>
<text transform="translate(375,276) rotate(-90)" letter-spacing="0">+0.05</text>
<text transform="translate(375,424) rotate(-90)" letter-spacing="0">0</text>
<text transform="translate(375,571) rotate(-90)" letter-spacing="0">-0.05</text>
<text transform="translate(375,718) rotate(-90)" letter-spacing="0">-0.1</text>
<text x="368.3" y="850" font-size="11.5px" letter-spacing="-0.5">mm</text>
</g>
<defs><linearGradient id="vs" x1="0" y1="0" x2="1" y2="0"><stop offset="0" stop-color="#f1f1f1"/><stop offset=".08" stop-color="#e7e7e7"/><stop offset="1" stop-color="#e8e8e8"/></linearGradient><linearGradient id="hs" x1="0" y1="0" x2="0" y2="1"><stop offset="0" stop-color="#f4f4f4"/><stop offset=".5" stop-color="#e6e6e6"/><stop offset="1" stop-color="#e0e0e0"/></linearGradient><linearGradient id="sb" x1="0" y1="0" x2="1" y2="1"><stop offset="0" stop-color="#ffffff"/><stop offset="1" stop-color="#dcdcdc"/></linearGradient></defs>
<rect x="1576" y="82" width="17" height="776" fill="url(#vs)"/>
<rect x="1577.5" y="83.5" width="14" height="15" fill="url(#sb)" stroke="#a9a9a9"/>
<path d="M1581 93.2 L1584.5 89.2 L1588 93.2 Z" fill="#333"/>
<rect x="1577.5" y="842.5" width="14" height="14" fill="url(#sb)" stroke="#a9a9a9"/>
<path d="M1581.5 847.5 L1584.5 851 L1587.5 847.5 Z" fill="#333"/>
<path d="M1581 637.5 H1587 M1581 640.5 H1587 M1581 643.5 H1587" stroke="#333" stroke-width="1.2"/>
<rect x="365" y="858" width="1211" height="17" fill="url(#hs)"/>
<rect x="365" y="858" width="1211" height="1" fill="#fdfdfd"/>
<path d="M375.2 863 L371.2 866.5 L375.2 870 Z" fill="#333"/>
<path d="M1566 863 L1570 866.5 L1566 870 Z" fill="#333"/>
<rect x="1576" y="858" width="17" height="17" fill="#000"/>
</svg>
</body>
</html>
